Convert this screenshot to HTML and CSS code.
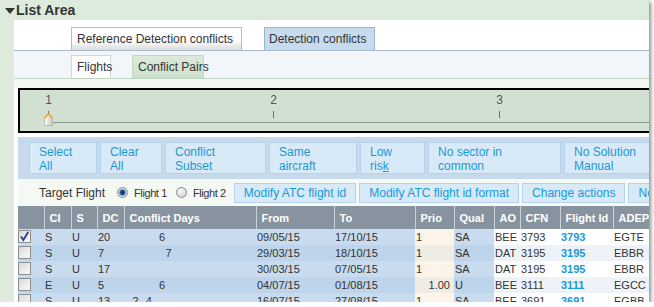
FILE: index.html
```html
<!DOCTYPE html>
<html>
<head>
<meta charset="utf-8">
<link rel="stylesheet" href="styles.css">
</head>
<body>
<div class="frame">
  <div class="hdr"><span class="tri"></span><span>List Area</span></div>
  <div class="panel">
    <div class="tabs1">
      <div class="tab tab-ref">Reference Detection conflicts</div>
      <div class="tab tab-det">Detection conflicts</div>
    </div>
    <div class="tabs2">
      <div class="tab stab-on">Flights</div>
      <div class="tab stab-green">Conflict Pairs</div>
    </div>
    <div class="spacer"></div>
    <div class="content">
      <div class="slider">
        <span class="lbl l1">1</span><span class="lbl l2">2</span><span class="lbl l3">3</span>
        <span class="tick l1"></span><span class="tick l2"></span><span class="tick l3"></span>
        <span class="track"></span>
        <svg class="thumb" width="11" height="13" viewBox="0 0 11 13">
          <defs>
            <linearGradient id="tg" x1="0" y1="0" x2="1" y2="0">
              <stop offset="0" stop-color="#ffffff"/>
              <stop offset="1" stop-color="#c4c4c4"/>
            </linearGradient>
          </defs>
          <path d="M1.5 12.5 V5 L5.5 1 L9.5 5 V12.5 Z" fill="url(#tg)" stroke="#b0b0b0" stroke-width="0.8"/>
          <path d="M1.2 5.3 L5.5 1 L9.8 5.3" fill="none" stroke="#f5a21b" stroke-width="1.6"/>
        </svg>
      </div>
      <div class="bar">
        <div class="btn w1">Select<br>All</div>
        <div class="btn w2">Clear<br>All</div>
        <div class="btn w3">Conflict<br>Subset</div>
        <div class="btn w4">Same<br>aircraft</div>
        <div class="btn w5">Low<br>ris<u>k</u></div>
        <div class="btn w6">No sector in<br>common</div>
        <div class="btn w7">No Solution<br>Manual</div>
      </div>
      <div class="target">
        <span class="tlabel">Target Flight</span>
        <span class="rb on"></span><span class="rlabel">Flight 1</span>
        <span class="rb off r2"></span><span class="rlabel">Flight 2</span>
        <div class="tbtns">
          <div class="tbtn">Modify ATC flight id</div>
          <div class="tbtn">Modify ATC flight id format</div>
          <div class="tbtn">Change actions</div>
          <div class="tbtn">New action</div>
        </div>
      </div>
      <table class="grid">
        <colgroup>
          <col class="c26"><col class="c27"><col class="c26"><col class="c27"><col class="c132"><col class="c78"><col class="c81"><col class="c39"><col class="c40"><col class="c26"><col class="c40"><col class="c53"><col class="c60">
        </colgroup>
        <thead>
          <tr><th></th><th>CI</th><th>S</th><th>DC</th><th>Conflict Days</th><th>From</th><th>To</th><th>Prio</th><th>Qual</th><th>AO</th><th>CFN</th><th>Flight Id</th><th>ADEP</th></tr>
        </thead>
        <tbody>
          <tr class="o">
            <td class="ck"><span class="cb"><svg width="11" height="11" viewBox="0 0 11 11"><path d="M2 5.5 L4.3 9 L9.2 1" fill="none" stroke="#2a3a8e" stroke-width="1.8"/></svg></span></td>
            <td>S</td><td>U</td><td>20</td>
            <td class="cd"><span class="d"></span><span class="d"></span><span class="d"></span><span class="d"></span><span class="d"></span><span class="d">6</span></td>
            <td>09/05/15</td><td>17/10/15</td><td class="p">1</td><td>SA</td>
            <td class="w">BEE</td><td class="w">3793</td><td class="w fid">3793</td><td class="w">EGTE</td>
          </tr>
          <tr class="e">
            <td class="ck"><span class="cb"></span></td>
            <td>S</td><td>U</td><td>7</td>
            <td class="cd"><span class="d"></span><span class="d"></span><span class="d"></span><span class="d"></span><span class="d"></span><span class="d"></span><span class="d">7</span></td>
            <td>29/03/15</td><td>18/10/15</td><td class="p">1</td><td>SA</td>
            <td class="w">DAT</td><td class="w">3195</td><td class="w fid">3195</td><td class="w">EBBR</td>
          </tr>
          <tr class="o">
            <td class="ck"><span class="cb"></span></td>
            <td>S</td><td>U</td><td>17</td>
            <td class="cd"></td>
            <td>30/03/15</td><td>07/05/15</td><td class="p">1</td><td>SA</td>
            <td class="w">DAT</td><td class="w">3195</td><td class="w fid">3195</td><td class="w">EBBR</td>
          </tr>
          <tr class="e">
            <td class="ck"><span class="cb"></span></td>
            <td>E</td><td>U</td><td>5</td>
            <td class="cd"><span class="d"></span><span class="d"></span><span class="d"></span><span class="d"></span><span class="d"></span><span class="d">6</span></td>
            <td>04/07/15</td><td>01/08/15</td><td class="p r">1.00</td><td>U</td>
            <td class="w">BEE</td><td class="w">3111</td><td class="w fid">3111</td><td class="w">EGCC</td>
          </tr>
          <tr class="o">
            <td class="ck"><span class="cb"></span></td>
            <td>S</td><td>U</td><td>13</td>
            <td class="cd"><span class="d"></span><span class="d">2</span><span class="d"></span><span class="d">4</span></td>
            <td>16/07/15</td><td>27/08/15</td><td class="p">1</td><td>SA</td>
            <td class="w">BEE</td><td class="w">3691</td><td class="w fid">3691</td><td class="w">EGBB</td>
          </tr>
        </tbody>
      </table>
    </div>
  </div>
</div>
</body>
</html>
```
FILE: styles.css
```css
* { box-sizing: border-box; }
body {
  margin: 0;
  background: #ffffff;
  font-family: "Liberation Sans", Arial, sans-serif;
}
.frame {
  width: 649px;
  height: 302px;
  overflow: hidden;
  background: #dcebdc;
  box-shadow: 2px 2px 4px rgba(0, 0, 0, 0.45);
  display: flex;
  flex-direction: column;
}
.hdr {
  height: 20px;
  flex: none;
  display: flex;
  align-items: center;
  padding-left: 5px;
  font-weight: bold;
  font-size: 14px;
  line-height: 20px;
  color: #333;
}
.tri {
  width: 0;
  height: 0;
  border-left: 5px solid transparent;
  border-right: 5px solid transparent;
  border-top: 6px solid #333;
  margin: 2px 1px 0 0;
}
.panel {
  flex: 1;
  min-height: 0;
  margin-left: 14px;
  background: #ffffff;
  overflow: hidden;
}
.tabs1 {
  height: 31px;
  border-bottom: 1px solid #a9bccd;
  padding: 7px 0 0 57px;
  display: flex;
  gap: 22px;
}
.tabs2 {
  height: 28px;
  background: #f2f6fb;
  border-bottom: 1px solid #c3d3c3;
  padding: 4px 0 0 57px;
  display: flex;
  gap: 21px;
}
.tab {
  flex: none;
  height: 23px;
  font-size: 12px;
  line-height: 22px;
  color: #333;
  border: 1px solid #bdbdbd;
  border-bottom: 0;
  padding-left: 5px;
  white-space: nowrap;
}
.tab-ref {
  width: 171px;
  background: linear-gradient(#ffffff 55%, #dcdcdc);
}
.tab-det {
  width: 111px;
  padding-left: 4px;
  background: #c7dbee;
  border-color: #9db4cb;
}
.stab-on {
  width: 40px;
  background: #ffffff;
  border-color: #cfd6dc;
}
.stab-green {
  width: 72px;
  background: linear-gradient(#dbeadb, #cde0cd);
  border-color: #c4d6c4;
}
.spacer {
  height: 9px;
  background: #f3f8f3;
}
.content {
  padding-left: 4px;
}
.slider {
  position: relative;
  height: 45px;
  border: 2px solid #000;
  border-right: 0;
  background: #d2e0d2;
  margin-bottom: 4px;
}
.lbl {
  position: absolute;
  top: 3px;
  font-size: 12px;
  line-height: 14px;
  color: #555;
  transform: translateX(-50%);
}
.tick {
  position: absolute;
  top: 21px;
  width: 1px;
  height: 7px;
  background: #6a6a6a;
}
.l1 { left: 28px; }
.l2 { left: 253px; }
.l3 { left: 479px; }
.lbl.l1 { left: 28.5px; }
.lbl.l2 { left: 253.5px; }
.lbl.l3 { left: 479.5px; }
.track {
  position: absolute;
  top: 32px;
  left: 30px;
  right: 0;
  height: 1px;
  background: #8b9b8b;
}
.thumb {
  position: absolute;
  left: 23px;
  top: 23px;
}
.bar {
  height: 42px;
  background: #c6daec;
  display: flex;
  gap: 3px;
  padding: 5px 0 0 11px;
}
.btn {
  flex: none;
  height: 32px;
  border: 1px solid #b6d2ec;
  background: #d8eaf8;
  color: #1a98d6;
  font-size: 12px;
  line-height: 14px;
  padding: 2px 0 0 9px;
  white-space: nowrap;
}
.btn u { text-decoration-thickness: 1px; text-underline-offset: 1px; }
.w1 { width: 68px; }
.w2 { width: 62px; }
.w3 { width: 101px; }
.w4 { width: 88px; }
.w5 { width: 65px; }
.w6 { width: 133px; }
.w7 { width: 110px; }
.target {
  height: 27px;
  background: #f4f9f4;
  display: flex;
  align-items: center;
  padding-left: 21px;
  font-size: 12px;
  color: #333;
  white-space: nowrap;
}
.tlabel { flex: none; }
.rb {
  flex: none;
  width: 11px;
  height: 11px;
  border-radius: 50%;
  border: 1px solid #8a8a8a;
  margin-left: 12px;
}
.rb.r2 { margin-left: 9px; }
.rb.on {
  background: radial-gradient(circle, #0b2a66 0, #1b4a92 2px, #6f98c9 3px, #d9e4f0 4px, #eef2f6 5px);
}
.rb.off {
  background: radial-gradient(circle at 40% 35%, #fbfbfb, #c8c8c8);
}
.rlabel {
  flex: none;
  margin-left: 6px;
  font-size: 11px;
  letter-spacing: -0.4px;
}
.tbtns {
  display: flex;
  gap: 3px;
  margin-left: 8px;
}
.tbtn {
  flex: none;
  height: 20px;
  border: 1px solid #b6d2ec;
  background: #d8eaf8;
  color: #1a98d6;
  font-size: 12px;
  line-height: 18px;
  padding: 0 9px;
  white-space: nowrap;
}
.grid {
  border-collapse: collapse;
  table-layout: fixed;
  width: 655px;
  font-size: 11px;
}
.c26 { width: 26px; }
.c27 { width: 27px; }
.c132 { width: 132px; }
.c78 { width: 78px; }
.c81 { width: 81px; }
.c39 { width: 39px; }
.c40 { width: 40px; }
.c53 { width: 53px; }
.c60 { width: 60px; }
.grid th {
  height: 23px;
  background: #8794a0;
  color: #ffffff;
  font-weight: bold;
  text-align: left;
  padding: 0 0 0 5px;
  border-left: 1px solid #c9d1d9;
  white-space: nowrap;
  overflow: hidden;
}
.grid th:first-child { border-left: 0; }
.grid td {
  height: 16px;
  line-height: 16px;
  padding: 0 0 0 1px;
  color: #333;
  white-space: nowrap;
  overflow: hidden;
}
.grid tr.o td { background: #c9dcef; }
.grid tr.e td { background: #bdd4ea; }
.grid tr.o td.p { background: #fcf3e9; }
.grid tr.e td.p { background: #efece4; }
.grid tr.o td.w { background: #ffffff; }
.grid tr.e td.w { background: #eef3f9; }
.grid td.r { text-align: right; padding-right: 4px; }
.grid td.fid { color: #1a98d6; font-weight: bold; }
.grid td.ck { padding: 1px 0 0 0; vertical-align: top; }
.grid td.cd { padding-left: 2px; }
.d {
  display: inline-block;
  width: 6.6px;
}
.cb {
  display: block;
  width: 13px;
  height: 13px;
  border: 1px solid #8e8f8f;
  background: linear-gradient(135deg, #d8d8d8, #fbfbfb);
}
.cb svg { display: block; }
```
